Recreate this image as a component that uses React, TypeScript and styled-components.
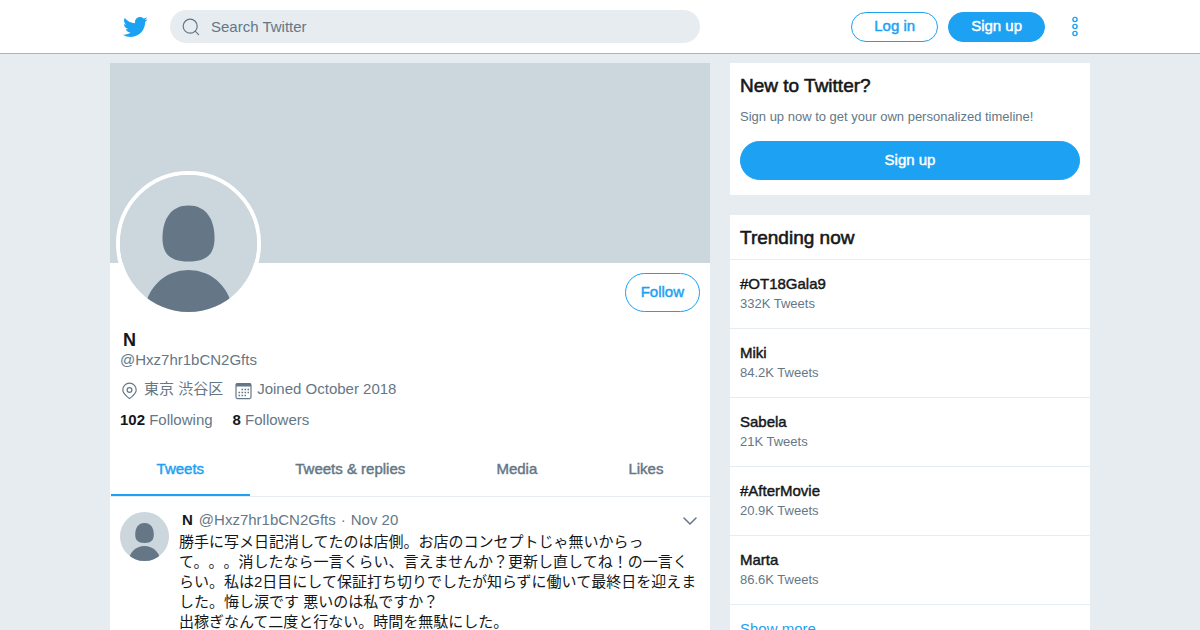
import React from "react";
import styled, { createGlobalStyle, css } from "styled-components";

const color = {
  blue: "#1da1f2",
  ink: "#14171a",
  grey: "#657786",
  line: "#e6ecf0",
  cover: "#ccd6dd",
};

const GlobalStyle = createGlobalStyle`
  *, *::before, *::after { box-sizing: border-box; }
  html { scrollbar-width: none; }
  body {
    margin: 0;
    background: ${color.line};
    color: ${color.ink};
    font: 15px/20px "Liberation Sans", "Noto Sans CJK JP", sans-serif;
  }
  h1, h2, p, ul { margin: 0; padding: 0; }
  ul { list-style: none; }
  a { color: inherit; text-decoration: none; }
  button { font: inherit; cursor: pointer; }
  svg { display: block; }
`;

const mediumText = css`
  -webkit-text-stroke: 0.03em currentColor;
`;

const Header = styled.header`
  background: #fff;
  border-bottom: 1px solid #aab3bb;
`;

const columns = css`
  display: grid;
  grid-template-columns: 5fr 3fr;
  column-gap: 20px;
  max-width: 1000px;
  margin: 0 auto;
  padding: 0 10px;
`;

const HeaderInner = styled.div`
  ${columns}
  align-items: center;
  height: 53px;
`;

const HeaderStart = styled.div`
  display: flex;
  align-items: center;
  padding-right: 10px;
`;

const LogoLink = styled.a`
  flex: 0 0 60px;
  padding-left: 12px;
  color: ${color.blue};
`;

const SearchBox = styled.form`
  display: flex;
  flex: 1;
  align-items: center;
  gap: 11px;
  height: 33px;
  padding: 0 12px;
  border-radius: 17px;
  background: ${color.line};
  color: ${color.grey};
`;

const SearchInput = styled.input`
  flex: 1;
  min-width: 0;
  padding: 0;
  border: 0;
  outline: 0;
  background: transparent;
  color: ${color.ink};
  font: inherit;
  &::placeholder { color: ${color.grey}; opacity: 1; }
`;

const HeaderNav = styled.nav`
  display: flex;
  align-items: center;
  justify-content: flex-end;
  gap: 10px;
`;

const Pill = styled.button<{ $filled?: boolean; $small?: boolean; $block?: boolean }>`
  ${mediumText}
  display: ${(p) => (p.$block ? "block" : "inline-block")};
  width: ${(p) => (p.$block ? "100%" : "auto")};
  height: ${(p) => (p.$small ? "30px" : "39px")};
  padding: 0 ${(p) => (p.$small ? "22px" : "15px")} 2px;
  border: 1px solid ${color.blue};
  border-radius: 20px;
  background: ${(p) => (p.$filled ? color.blue : "#fff")};
  color: ${(p) => (p.$filled ? "#fff" : color.blue)};
  line-height: 20px;
  white-space: nowrap;
`;

const IconButton = styled.button`
  display: grid;
  place-items: center;
  padding: 0;
  border: 0;
  background: transparent;
`;

const MenuButton = styled(IconButton)`
  width: 30px;
  height: 30px;
  margin-left: 5px;
  color: ${color.blue};
`;

const Page = styled.div`
  ${columns}
  align-items: start;
  padding-top: 9px;
`;

const Profile = styled.main`
  background: #fff;
`;

const Cover = styled.div`
  height: 200px;
  background: ${color.cover};
`;

const ProfileTop = styled.div`
  display: flex;
  align-items: flex-start;
  justify-content: space-between;
  padding: 0 10px 0 6px;
`;

const ProfilePicture = styled.a`
  margin-top: -92px;
  border: 4px solid #fff;
  border-radius: 50%;
`;

const FollowSlot = styled.div`
  padding-top: 10px;
`;

const ProfileInfo = styled.div`
  padding: 12px 10px;
  color: ${color.grey};
`;

const ProfileName = styled.h1`
  padding: 2px 0 0 3px;
  color: ${color.ink};
  font-size: 18px;
  line-height: 20px;
`;

const MetaRow = styled.div`
  display: flex;
  gap: 12px;
  margin-top: 9px;
`;

const MetaItem = styled.span`
  display: flex;
  gap: 5px;
  svg { margin-top: 3px; }
`;

const CountRow = styled.div`
  display: flex;
  gap: 20px;
  margin-top: 10px;
  strong { color: ${color.ink}; }
`;

const Tabs = styled.nav`
  display: flex;
  padding: 0 1px;
  border-bottom: 1px solid ${color.line};
`;

const Tab = styled.a<{ $active?: boolean }>`
  ${mediumText}
  flex: 1 1 auto;
  padding: 17px 10px 15px;
  border-bottom: 2px solid ${(p) => (p.$active ? color.blue : "transparent")};
  color: ${(p) => (p.$active ? color.blue : color.grey)};
  text-align: center;
`;

const Tweet = styled.article`
  display: flex;
  gap: 10px;
  padding: 13px 10px;
`;

const TweetPicture = styled.a`
  flex: none;
  padding-top: 2px;
`;

const TweetBody = styled.div`
  flex: 1;
  min-width: 0;
`;

const TweetHeader = styled.div`
  display: flex;
  align-items: center;
  gap: 5px;
  margin-bottom: 2px;
  padding: 0 3px;
  color: ${color.grey};
  strong { margin-right: 1px; color: ${color.ink}; }
  button { margin-left: auto; color: ${color.grey}; }
`;

const TweetText = styled.p`
  text-spacing-trim: space-all;
`;

const Sidebar = styled.aside`
  display: grid;
  gap: 20px;
`;

const Card = styled.section`
  background: #fff;
`;

const SignupCard = styled(Card)`
  padding: 10px 10px 15px;
`;

const CardTitle = styled.h2`
  ${mediumText}
  font-size: 19px;
  font-weight: 400;
  line-height: 25px;
`;

const SignupText = styled.p`
  margin: 9px 0 14px;
  color: ${color.grey};
  font-size: 13px;
`;

const TrendHeader = styled.div`
  padding: 10px 10px 9px;
`;

const TrendLink = styled.a`
  display: block;
  padding: 14px 10px;
  border-top: 1px solid ${color.line};
`;

const TrendName = styled.div`
  ${mediumText}
`;

const TrendCount = styled.div`
  color: ${color.grey};
  font-size: 13px;
`;

const MoreLink = styled(TrendLink)`
  color: ${color.blue};
`;

const Bird = () => (
  <svg width="26" height="26" viewBox="0 0 24 24" fill="currentColor" aria-hidden="true">
    <path d="M23.643 4.937c-.835.37-1.732.62-2.675.733.962-.576 1.7-1.49 2.048-2.578-.9.534-1.897.922-2.958 1.13-.85-.904-2.06-1.47-3.4-1.47-2.572 0-4.658 2.086-4.658 4.66 0 .364.042.718.12 1.06-3.873-.195-7.304-2.05-9.602-4.868-.4.69-.63 1.49-.63 2.342 0 1.616.823 3.043 2.072 3.878-.764-.025-1.482-.234-2.11-.583v.06c0 2.257 1.605 4.14 3.737 4.568-.392.106-.803.162-1.227.162-.3 0-.593-.028-.877-.082.593 1.85 2.313 3.198 4.352 3.234-1.595 1.25-3.604 1.995-5.786 1.995-.376 0-.747-.022-1.112-.065 2.062 1.323 4.51 2.093 7.14 2.093 8.57 0 13.255-7.098 13.255-13.254 0-.2-.005-.402-.014-.602.91-.658 1.7-1.477 2.323-2.41z" />
  </svg>
);

const SearchIcon = () => (
  <svg width="18" height="18" viewBox="0 0 18 18" fill="none" stroke="currentColor" strokeWidth="1.2" strokeLinecap="round" aria-hidden="true">
    <circle cx="8.2" cy="8.2" r="7" />
    <path d="M13.2 13.2l3.4 3.4" />
  </svg>
);

const MoreIcon = () => (
  <svg width="8" height="22" viewBox="0 0 8 22" fill="none" stroke="currentColor" strokeWidth="1.4" aria-hidden="true">
    <circle cx="4" cy="3.5" r="2.1" />
    <circle cx="4" cy="10.5" r="2.1" />
    <circle cx="4" cy="17.5" r="2.1" />
  </svg>
);

const PinIcon = () => (
  <svg width="19" height="18" viewBox="0 0 19 18" fill="none" stroke="currentColor" strokeWidth="1.2" aria-hidden="true">
    <path d="M9.5 16.6C6.6 14.3 2.8 11.4 2.8 7.9a6.7 6.7 0 0 1 13.4 0c0 3.5-3.8 6.4-6.7 8.7z" />
    <circle cx="9.5" cy="8" r="2.4" />
  </svg>
);

const CalendarIcon = () => (
  <svg width="17" height="18" viewBox="0 0 17 18" aria-hidden="true">
    <rect x="1" y="1.6" width="15" height="15" rx="1.5" fill="none" stroke="currentColor" strokeWidth="1.2" />
    <path d="M1 1.5h15v3H1z" fill="currentColor" />
    <path d="M6.5 7.5h7.5M3.5 10.5h10.5M3.5 13.5h7.5" stroke="currentColor" strokeWidth="1.6" strokeDasharray="1.6 1.4" />
  </svg>
);

const ChevronIcon = () => (
  <svg width="14" height="9" viewBox="0 0 14 9" fill="none" stroke="currentColor" strokeWidth="1.5" strokeLinecap="round" strokeLinejoin="round" aria-hidden="true">
    <path d="M1 2l6 6 6-6" />
  </svg>
);

const Avatar = ({ size, id }: { size: number; id: string }) => (
  <svg width={size} height={size} viewBox="0 0 137 137" role="img" aria-label="N">
    <clipPath id={id}>
      <circle cx="68.5" cy="68.5" r="68.5" />
    </clipPath>
    <g clipPath={`url(#${id})`}>
      <path d="M0 0h137v137H0z" fill={color.cover} />
      <path d="M68.5 30.5C51 30.5 42.5 44 42.5 63C42.5 79 50 86.5 68.5 86.5S94.5 79 94.5 63C94.5 44 86 30.5 68.5 30.5z" fill={color.grey} />
      <circle cx="68.5" cy="139" r="44" fill={color.grey} />
    </g>
  </svg>
);

const tabs = ["Tweets", "Tweets & replies", "Media", "Likes"];

const trends = [
  { name: "#OT18Gala9", count: "332K Tweets" },
  { name: "Miki", count: "84.2K Tweets" },
  { name: "Sabela", count: "21K Tweets" },
  { name: "#AfterMovie", count: "20.9K Tweets" },
  { name: "Marta", count: "86.6K Tweets" },
];

export default function App() {
  return (
    <>
      <GlobalStyle />
      <Header>
        <HeaderInner>
          <HeaderStart>
            <LogoLink href="#home" aria-label="Twitter">
              <Bird />
            </LogoLink>
            <SearchBox role="search">
              <SearchIcon />
              <SearchInput type="text" placeholder="Search Twitter" aria-label="Search Twitter" />
            </SearchBox>
          </HeaderStart>
          <HeaderNav>
            <Pill $small>Log in</Pill>
            <Pill $small $filled>Sign up</Pill>
            <MenuButton aria-label="More">
              <MoreIcon />
            </MenuButton>
          </HeaderNav>
        </HeaderInner>
      </Header>
      <Page>
        <Profile>
          <Cover />
          <ProfileTop>
            <ProfilePicture href="#photo">
              <Avatar size={137} id="profile-picture" />
            </ProfilePicture>
            <FollowSlot>
              <Pill>Follow</Pill>
            </FollowSlot>
          </ProfileTop>
          <ProfileInfo>
            <ProfileName>N</ProfileName>
            <div>@Hxz7hr1bCN2Gfts</div>
            <MetaRow>
              <MetaItem>
                <PinIcon />
                <span lang="ja">東京 渋谷区</span>
              </MetaItem>
              <MetaItem>
                <CalendarIcon />
                Joined October 2018
              </MetaItem>
            </MetaRow>
            <CountRow>
              <a href="#following"><strong>102</strong> Following</a>
              <a href="#followers"><strong>8</strong> Followers</a>
            </CountRow>
          </ProfileInfo>
          <Tabs>
            {tabs.map((label, i) => (
              <Tab key={label} href={`#tab-${i}`} $active={i === 0}>{label}</Tab>
            ))}
          </Tabs>
          <Tweet>
            <TweetPicture href="#profile">
              <Avatar size={49} id="tweet-picture" />
            </TweetPicture>
            <TweetBody>
              <TweetHeader>
                <strong>N</strong>
                <span>@Hxz7hr1bCN2Gfts</span>
                <span>·</span>
                <a href="#tweet">Nov 20</a>
                <IconButton aria-label="Tweet options">
                  <ChevronIcon />
                </IconButton>
              </TweetHeader>
              <TweetText lang="ja">
                勝手に写メ日記消してたのは店側。お店のコンセプトじゃ無いからって。。。消したなら一言くらい、言えませんか？更新し直してね！の一言くらい。私は2日目にして保証打ち切りでしたが知らずに働いて最終日を迎えました。悔し涙です 悪いのは私ですか？
                <br />
                出稼ぎなんて二度と行ない。時間を無駄にした。
              </TweetText>
            </TweetBody>
          </Tweet>
        </Profile>
        <Sidebar>
          <SignupCard>
            <CardTitle>New to Twitter?</CardTitle>
            <SignupText>Sign up now to get your own personalized timeline!</SignupText>
            <Pill $filled $block>Sign up</Pill>
          </SignupCard>
          <Card>
            <TrendHeader>
              <CardTitle>Trending now</CardTitle>
            </TrendHeader>
            <ul>
              {trends.map((trend) => (
                <li key={trend.name}>
                  <TrendLink href="#trend">
                    <TrendName>{trend.name}</TrendName>
                    <TrendCount>{trend.count}</TrendCount>
                  </TrendLink>
                </li>
              ))}
            </ul>
            <MoreLink href="#more">Show more</MoreLink>
          </Card>
        </Sidebar>
      </Page>
    </>
  );
}
